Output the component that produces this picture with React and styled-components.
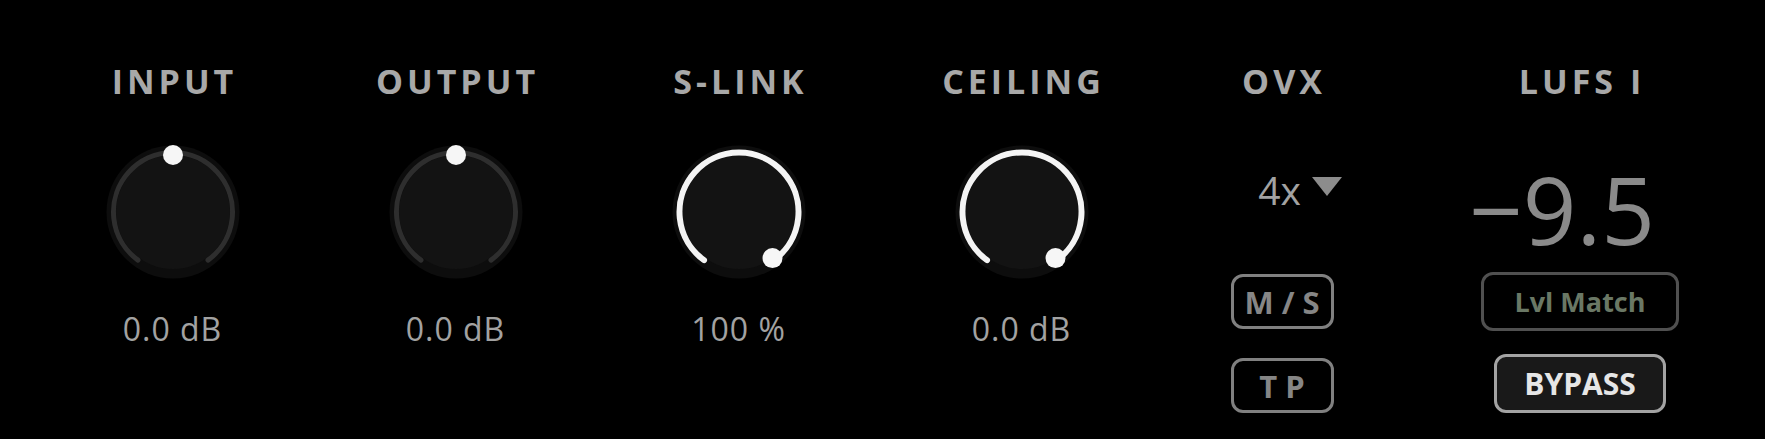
import React from "react";
import styled, { createGlobalStyle } from "styled-components";

const GlobalStyle = createGlobalStyle`
  html, body {
    margin: 0;
    padding: 0;
    background: #000;
  }
  body {
    font-family: "Open Sans", "DejaVu Sans", sans-serif;
  }
`;

const Panel = styled.div`
  width: 1765px;
  height: 439px;
  box-sizing: border-box;
  background: #000;
  display: grid;
  grid-template-columns: repeat(4, 283px) 238px 358px;
  padding: 61px 0 0 31px;
`;

const Column = styled.div`
  display: flex;
  flex-direction: column;
  align-items: center;
`;

const Label = styled.div`
  height: 40px;
  line-height: 40px;
  font-size: 34px;
  font-weight: 700;
  letter-spacing: 4px;
  padding-left: 4px;
  color: #a8a8a8;
  white-space: nowrap;
`;

const KnobSvg = styled.svg`
  display: block;
  margin-top: 41px;
`;

const Value = styled.div`
  margin-top: 27px;
  height: 40px;
  line-height: 40px;
  font-size: 32px;
  letter-spacing: 1px;
  color: #a2a2a2;
  white-space: nowrap;
`;

const Select = styled.div`
  margin-top: 67px;
  margin-left: 36px;
  height: 44px;
  display: flex;
  align-items: center;
  gap: 11px;
  font-size: 39px;
  line-height: 44px;
  color: #a2a2a2;
`;

const Caret = styled.span`
  width: 0;
  height: 0;
  border-left: 15.5px solid transparent;
  border-right: 15.5px solid transparent;
  border-top: 19px solid #8c8c8c;
  margin-top: -8px;
`;

const Toggle = styled.div`
  box-sizing: border-box;
  width: ${(p) => p.$w}px;
  height: ${(p) => p.$h}px;
  margin-top: ${(p) => p.$mt}px;
  border: 3px solid ${(p) => p.$border};
  border-radius: 12px;
  background: ${(p) => p.$bg || "transparent"};
  color: ${(p) => p.$color};
  font-size: ${(p) => p.$fs}px;
  font-weight: 700;
  display: flex;
  align-items: center;
  justify-content: center;
  white-space: nowrap;
`;

const Readout = styled.div`
  margin-top: 61px;
  margin-right: 36px;
  height: 94px;
  line-height: 94px;
  font-size: 94px;
  color: #8a8a8a;
  white-space: nowrap;
`;

const C = 70;
const START = -144;
const END = 144;

const polar = (r, deg) => {
  const a = (deg * Math.PI) / 180;
  return [C + r * Math.sin(a), C - r * Math.cos(a)];
};

const arc = (r, a0, a1) => {
  const [x0, y0] = polar(r, a0);
  const [x1, y1] = polar(r, a1);
  const large = a1 - a0 > 180 ? 1 : 0;
  return `M ${x0} ${y0} A ${r} ${r} 0 ${large} 1 ${x1} ${y1}`;
};

const Knob = ({ value, active }) => {
  const angle = START + (END - START) * value;
  const [dx, dy] = polar(57, angle);
  return (
    <KnobSvg width="140" height="140" viewBox="0 0 140 140">
      <circle cx={C} cy={C} r="66.5" fill="#0d0d0d" />
      <circle cx={C} cy={C} r="57" fill="#131313" />
      <path d={arc(59.5, START, END)} stroke="#2e2e2e" strokeWidth="5" fill="none" strokeLinecap="round" />
      {active && (
        <path d={arc(59.5, START, angle)} stroke="#f4f4f4" strokeWidth="6" fill="none" strokeLinecap="round" />
      )}
      <circle cx={dx} cy={dy} r="10" fill="#f6f6f6" />
    </KnobSvg>
  );
};

const knobs = [
  { label: "INPUT", value: 0.5, active: false, text: "0.0 dB" },
  { label: "OUTPUT", value: 0.5, active: false, text: "0.0 dB" },
  { label: "S-LINK", value: 1, active: true, text: "100 %" },
  { label: "CEILING", value: 1, active: true, text: "0.0 dB" },
];

const App = () => (
  <>
    <GlobalStyle />
    <Panel>
      {knobs.map((k) => (
        <Column key={k.label}>
          <Label>{k.label}</Label>
          <Knob value={k.value} active={k.active} />
          <Value>{k.text}</Value>
        </Column>
      ))}
      <Column>
        <Label>OVX</Label>
        <Select>
          <span>4x</span>
          <Caret />
        </Select>
        <Toggle $w={103} $h={55} $mt={62} $border="#808080" $color="#868686" $fs={31}>
          M / S
        </Toggle>
        <Toggle $w={103} $h={55} $mt={29} $border="#808080" $color="#868686" $fs={31}>
          T P
        </Toggle>
      </Column>
      <Column>
        <Label>LUFS I</Label>
        <Readout>−9.5</Readout>
        <Toggle $w={198} $h={59} $mt={16} $border="#505050" $color="#6a7865" $fs={27}>
          Lvl Match
        </Toggle>
        <Toggle $w={172} $h={59} $mt={23} $border="#a3a3a3" $bg="#191919" $color="#e6e6e6" $fs={30}>
          BYPASS
        </Toggle>
      </Column>
    </Panel>
  </>
);

export default App;
